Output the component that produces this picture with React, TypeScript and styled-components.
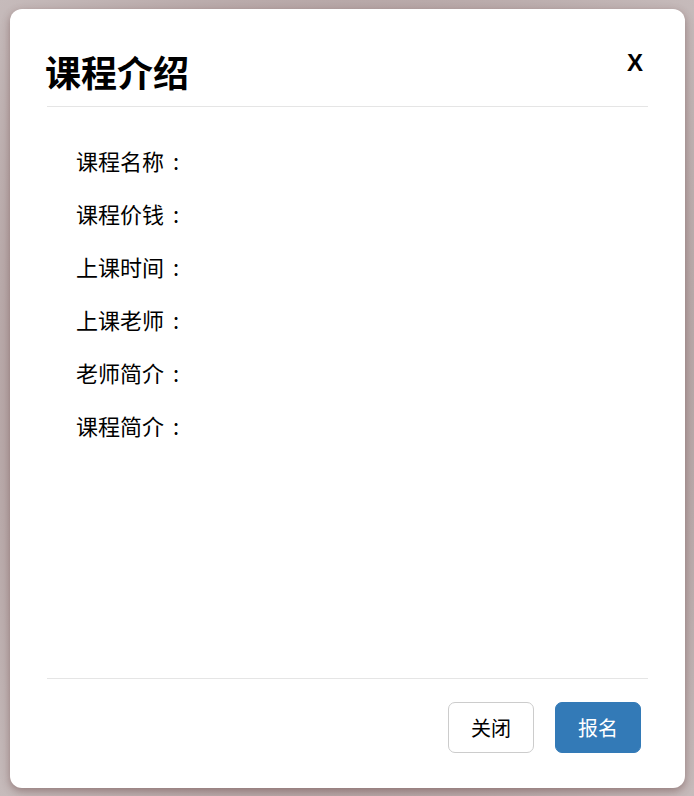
import React, { ReactElement } from 'react';
import styled, { createGlobalStyle } from 'styled-components';

const fields = ['课程名称', '课程价钱', '上课时间', '上课老师', '老师简介', '课程简介'];

const App = (): ReactElement => {
  return (
    <>
      <GlobalStyle />
      <Backdrop>
        <Dialog>
          <Header>
            <Title>课程介绍</Title>
            <CloseX>X</CloseX>
          </Header>
          <Body>
            {fields.map((f) => (
              <Field key={f}>
                {f}
                <Colon>:</Colon>
              </Field>
            ))}
          </Body>
          <Footer>
            <Button>关闭</Button>
            <Button primary>报名</Button>
          </Footer>
        </Dialog>
      </Backdrop>
    </>
  );
};

const GlobalStyle = createGlobalStyle`
  html, body {
    margin: 0;
    padding: 0;
  }
  body {
    background: #c2b5b5;
    font-family: "Noto Sans CJK SC", "Liberation Sans", sans-serif;
    color: #000;
  }
`;

const Backdrop = styled.div`
  width: 694px;
  height: 796px;
  padding: 9px 9px 8px 10px;
  box-sizing: border-box;
  background: radial-gradient(ellipse at center, #b3a2a2 60%, #c6bbbb 100%);
`;

const Dialog = styled.div`
  width: 675px;
  height: 779px;
  box-sizing: border-box;
  background: #fff;
  border-radius: 12px;
  box-shadow: 0 3px 9px rgba(90, 50, 50, 0.45);
  padding: 0 37px;
  display: flex;
  flex-direction: column;
`;

const Header = styled.div`
  height: 98px;
  box-sizing: border-box;
  border-bottom: 1px solid #e5e5e5;
  display: flex;
  justify-content: space-between;
  align-items: flex-start;
`;

const Title = styled.h2`
  margin: 40px 0 0 -2px;
  font-size: 36px;
  line-height: 44px;
  font-weight: 700;
`;

const CloseX = styled.span`
  margin: 39px 5px 0 0;
  font-family: "Liberation Sans", sans-serif;
  font-size: 24px;
  font-weight: 700;
  line-height: 30px;
  cursor: pointer;
`;

const Body = styled.div`
  flex: 1;
  padding: 37px 0 0 29px;
  display: flex;
  flex-direction: column;
`;

const Field = styled.div`
  font-size: 22px;
  line-height: 32px;
  margin-bottom: 21px;
`;

const Colon = styled.span`
  margin-left: 9px;
`;

const Footer = styled.div`
  height: 110px;
  box-sizing: border-box;
  border-top: 1px solid #e5e5e5;
  display: flex;
  justify-content: flex-end;
  align-items: flex-start;
  gap: 21px;
  padding: 23px 7px 0 0;
`;

const Button = styled.button<{ primary?: boolean }>`
  width: 86px;
  height: 51px;
  box-sizing: border-box;
  border-radius: 7px;
  font-family: "Noto Sans CJK SC", sans-serif;
  font-size: 20px;
  border: 1px solid ${(p) => (p.primary ? '#337ab7' : '#ccc')};
  background: ${(p) => (p.primary ? '#337ab7' : '#fff')};
  color: ${(p) => (p.primary ? '#fff' : '#000')};
  cursor: pointer;
`;

export default App;
